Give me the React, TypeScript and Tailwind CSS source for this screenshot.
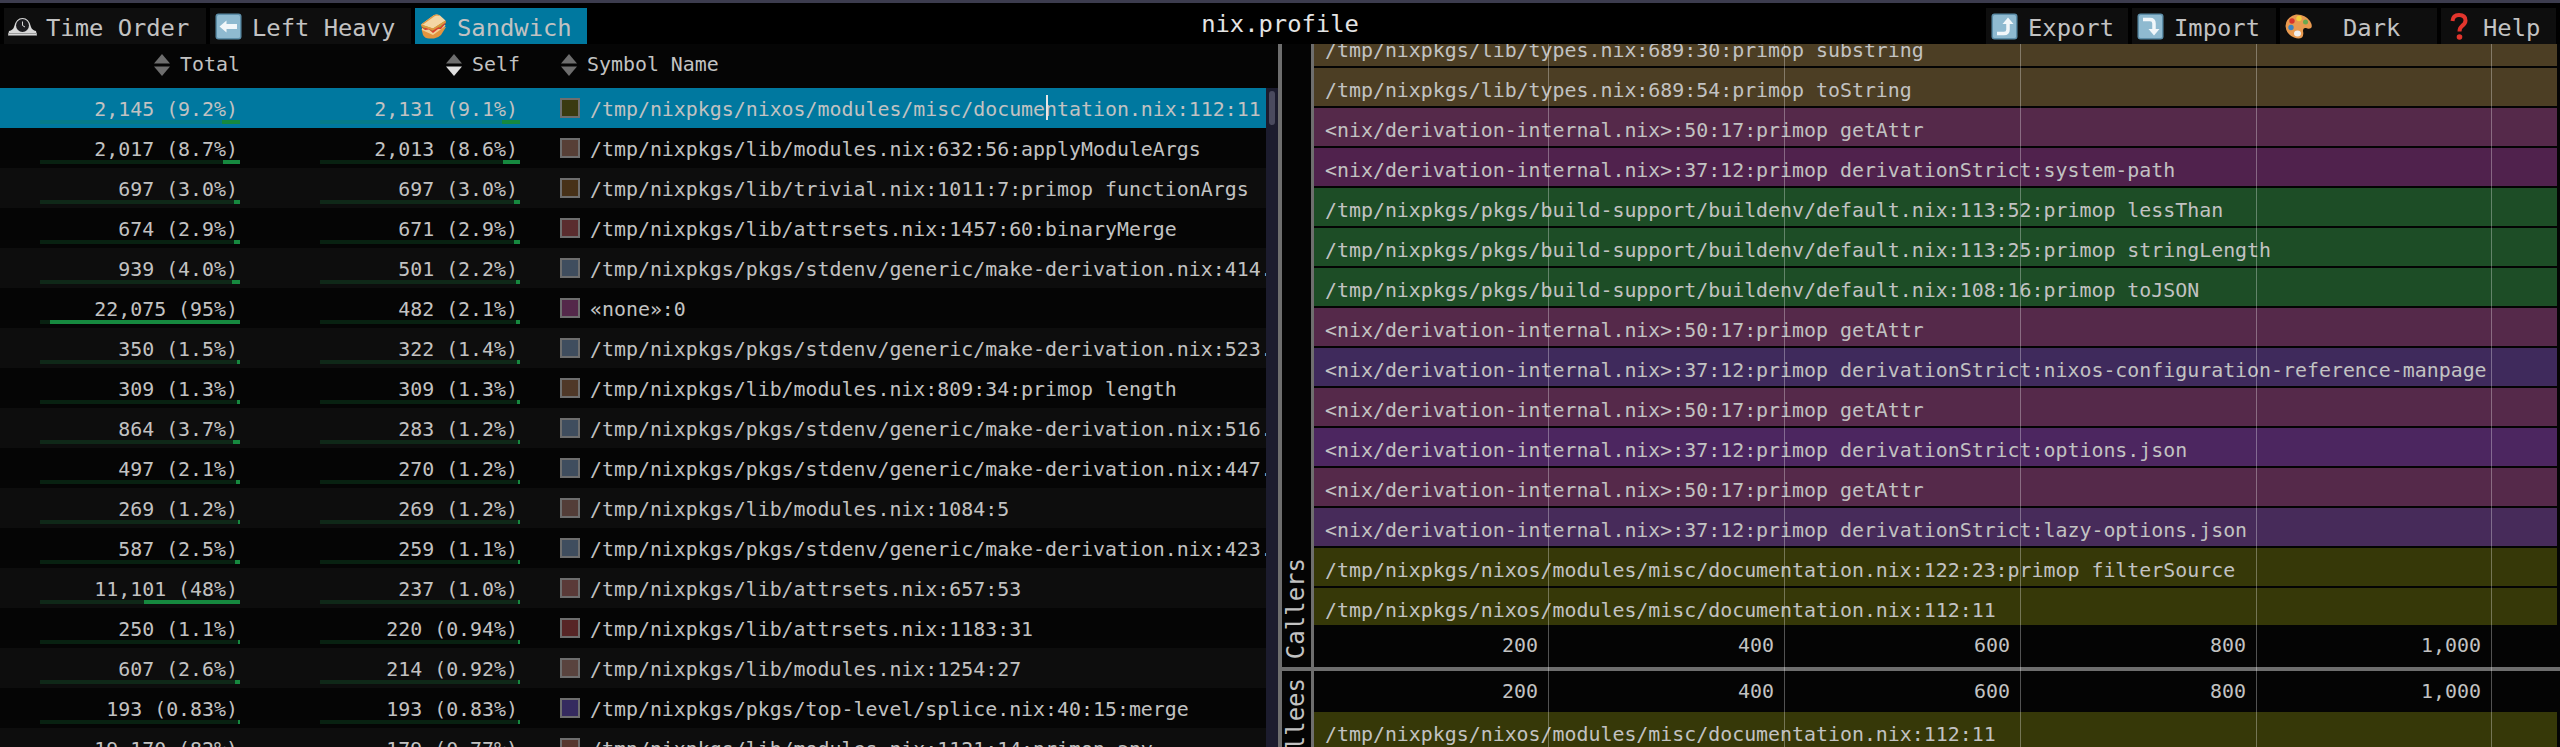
import React from 'react';

const Keycap: React.FC<{ children: React.ReactNode }> = ({ children }) => (
  <svg width="27" height="27" viewBox="0 0 27 27" className="shrink-0">
    <rect x="0.5" y="0.5" width="26" height="26" rx="3" fill="#5d8ea8" />
    <rect x="2" y="2" width="23" height="23" rx="1.5" fill="#8fbad0" />
    {children}
  </svg>
);

const ClockIcon = () => (
  <svg width="29" height="19" viewBox="0 0 29 19" className="shrink-0">
    <path d="M0 18.5 L1 14 Q5 13 6 10 Q8 1 14.5 1 Q21 1 23 10 Q24 13 28 14 L29 18.5 Z" fill="#d8d8d8" />
    <rect x="0" y="16" width="29" height="1" fill="#9a9a9a" />
    <circle cx="14.5" cy="8.5" r="6.5" fill="#1b1b1f" />
    <path d="M14.5 4.5 V8.5 L17 10" stroke="#d8d8d8" strokeWidth="1" fill="none" />
  </svg>
);

const LeftArrowIcon = () => (
  <Keycap>
    <path d="M4.5 13.5 L11.5 7.5 V11 H22 V16 H11.5 V19.5 Z" fill="#f2f7fa" />
  </Keycap>
);

const ExportIcon = () => (
  <Keycap>
    <path d="M6 20.5 H13 Q17 20.5 17 16.5 V10" stroke="#f2f7fa" strokeWidth="3.5" fill="none" />
    <path d="M11.5 11 L17 4.5 L22.5 11 Z" fill="#f2f7fa" />
  </Keycap>
);

const ImportIcon = () => (
  <Keycap>
    <path d="M6 6.5 H13 Q17 6.5 17 10.5 V17" stroke="#f2f7fa" strokeWidth="3.5" fill="none" />
    <path d="M11.5 16 L17 22.5 L22.5 16 Z" fill="#f2f7fa" />
  </Keycap>
);

const SandwichIcon = () => (
  <svg width="27" height="25" viewBox="0 0 27 25" className="shrink-0">
    {/* bottom slice */}
    <path d="M1.5 15 L3 21 Q5 24.5 9 24.5 H14 Q18 24 21 21 L26 13 Z" fill="#e3953f" />
    <path d="M2 16 L13 21 L25.5 12 L25 11 L2 14 Z" fill="#f2cf95" />
    {/* filling */}
    <path d="M1 13 L5 16 L9 15.5 L13 19 L18 15 L21 15 L26 9 L14 10 Z" fill="#d8402f" />
    <path d="M1 11.5 L4 14.5 L8 13 L12 17 L17 13 L20 13.5 L26 7 L14 6 Z" fill="#86ad38" />
    {/* top slice */}
    <path d="M1 10.5 L13 14.5 L25.5 6.5 L20 1.5 Q17 0 14 1 Z" fill="#f5d7a4" />
    <path d="M1 10.5 L14 1 Q17 0 20 1.5 L18.5 1.8 Q16.5 1.2 14.5 2.2 L3 10.6 Z" fill="#e3953f" />
    <path d="M1 10.5 L13 14.5 L25.5 6.5 L26 8.5 L13 16.5 L1.5 12.5 Z" fill="#e3953f" />
  </svg>
);

const PaletteIcon = () => (
  <svg width="27" height="25" viewBox="0 0 27 25" className="shrink-0">
    <path d="M11 0.5 Q20 0 25 7 Q28 12 26 14 Q24 15.5 21 14 Q18 13.5 18 17 Q19 21 17 23.5 Q14 25.5 9 23.5 Q1 20 0.5 12 Q1 3 11 0.5 Z" fill="#e89a50" />
    <circle cx="7" cy="7" r="2.7" fill="#d8342c" />
    <circle cx="14" cy="4.5" r="2.7" fill="#f2cf3b" />
    <circle cx="20.5" cy="8" r="2.5" fill="#6aa84f" />
    <circle cx="6" cy="13.5" r="2.7" fill="#3b82c4" />
    <ellipse cx="12.5" cy="19.5" rx="3.5" ry="3" fill="#eeeeee" />
  </svg>
);

const QuestionIcon = () => (
  <svg width="18" height="27" viewBox="0 0 18 27" className="shrink-0">
    <path d="M2.5 8 Q3 2 9 2 Q15.5 2 15.5 7.5 Q15.5 10.5 12 13 Q9.5 15 9.5 18.5" stroke="#e3352d" strokeWidth="4" fill="none" />
    <circle cx="9.5" cy="24" r="2.8" fill="#e3352d" />
  </svg>
);

interface TabProps {
  icon: React.ReactNode;
  label: string;
  widthClass: string;
  labelClass?: string;
  active?: boolean;
}

const ToolbarTab: React.FC<TabProps> = ({ icon, label, widthClass, labelClass, active }) => (
  <div className={`flex h-9 items-center ${widthClass} ${active ? 'bg-[#00789f]' : 'bg-[#0e0e0e]'}`}>
    <div className="flex w-[42px] shrink-0 justify-center pr-[8px] pl-[2px]">{icon}</div>
    <span className={`pt-[5px] leading-none ${labelClass ?? ''}`}>{label}</span>
  </div>
);

interface SymbolRow {
  total: string;
  totalPct: number;
  self: string;
  selfPct: number;
  swatch: string;
  name: string;
}

const makeDeriv = (line: string) => `/tmp/nixpkgs/pkgs/stdenv/generic/make-derivation.nix:${line}.`;

const symbolRows: SymbolRow[] = [
  { total: '2,145 (9.2%)', totalPct: 9.2, self: '2,131 (9.1%)', selfPct: 9.1, swatch: '#3a3a10', name: '/tmp/nixpkgs/nixos/modules/misc/documentation.nix:112:11' },
  { total: '2,017 (8.7%)', totalPct: 8.7, self: '2,013 (8.6%)', selfPct: 8.6, swatch: '#573f36', name: '/tmp/nixpkgs/lib/modules.nix:632:56:applyModuleArgs' },
  { total: '697 (3.0%)', totalPct: 3.0, self: '697 (3.0%)', selfPct: 3.0, swatch: '#473118', name: '/tmp/nixpkgs/lib/trivial.nix:1011:7:primop functionArgs' },
  { total: '674 (2.9%)', totalPct: 2.9, self: '671 (2.9%)', selfPct: 2.9, swatch: '#5a2c2e', name: '/tmp/nixpkgs/lib/attrsets.nix:1457:60:binaryMerge' },
  { total: '939 (4.0%)', totalPct: 4.0, self: '501 (2.2%)', selfPct: 2.2, swatch: '#3f4d5e', name: makeDeriv('414') },
  { total: '22,075 (95%)', totalPct: 95, self: '482 (2.1%)', selfPct: 2.1, swatch: '#54284a', name: '«none»:0' },
  { total: '350 (1.5%)', totalPct: 1.5, self: '322 (1.4%)', selfPct: 1.4, swatch: '#3f4d5e', name: makeDeriv('523') },
  { total: '309 (1.3%)', totalPct: 1.3, self: '309 (1.3%)', selfPct: 1.3, swatch: '#4f3828', name: '/tmp/nixpkgs/lib/modules.nix:809:34:primop length' },
  { total: '864 (3.7%)', totalPct: 3.7, self: '283 (1.2%)', selfPct: 1.2, swatch: '#3f4d5e', name: makeDeriv('516') },
  { total: '497 (2.1%)', totalPct: 2.1, self: '270 (1.2%)', selfPct: 1.2, swatch: '#3f4d5e', name: makeDeriv('447') },
  { total: '269 (1.2%)', totalPct: 1.2, self: '269 (1.2%)', selfPct: 1.2, swatch: '#533d38', name: '/tmp/nixpkgs/lib/modules.nix:1084:5' },
  { total: '587 (2.5%)', totalPct: 2.5, self: '259 (1.1%)', selfPct: 1.1, swatch: '#3f4d5e', name: makeDeriv('423') },
  { total: '11,101 (48%)', totalPct: 48, self: '237 (1.0%)', selfPct: 1.0, swatch: '#5a3a38', name: '/tmp/nixpkgs/lib/attrsets.nix:657:53' },
  { total: '250 (1.1%)', totalPct: 1.1, self: '220 (0.94%)', selfPct: 0.94, swatch: '#572526', name: '/tmp/nixpkgs/lib/attrsets.nix:1183:31' },
  { total: '607 (2.6%)', totalPct: 2.6, self: '214 (0.92%)', selfPct: 0.92, swatch: '#59433e', name: '/tmp/nixpkgs/lib/modules.nix:1254:27' },
  { total: '193 (0.83%)', totalPct: 0.83, self: '193 (0.83%)', selfPct: 0.83, swatch: '#352a5f', name: '/tmp/nixpkgs/pkgs/top-level/splice.nix:40:15:merge' },
  { total: '19,170 (82%)', totalPct: 82, self: '179 (0.77%)', selfPct: 0.77, swatch: '#56372e', name: '/tmp/nixpkgs/lib/modules.nix:1121:14:primop any' },
];

const MeterCell: React.FC<{ text: string; pct: number; className: string }> = ({ text, pct, className }) => (
  <div className={`flex w-[200px] shrink-0 flex-col ${className}`}>
    <div className="h-8 pt-[10px] pr-[2px] text-right leading-6 whitespace-nowrap">{text}</div>
    <div className="flex h-1 justify-end bg-[#16893f38]">
      <div className="h-1 bg-[#16893f]" style={{ width: `${Math.max(pct * 2, 2)}px` }} />
    </div>
  </div>
);

const SortArrows: React.FC<{ down?: boolean }> = ({ down }) => (
  <svg width="16" height="24" viewBox="0 0 16 24" className="shrink-0">
    <path d="M8 1 L16 10.5 H0 Z" fill="#6e6e6e" />
    <path d="M8 23 L16 13.5 H0 Z" fill={down ? '#e0e0e0' : '#6e6e6e'} />
  </svg>
);

const SymbolTable = () => (
  <div className="flex w-[1278px] shrink-0 flex-col bg-[#050505]">
    <div className="flex h-11 shrink-0 items-center pb-[2px]">
      <div className="ml-[154px] flex w-[86px] items-center gap-[10px]">
        <SortArrows />
        <span className="leading-none">Total</span>
      </div>
      <div className="ml-[206px] flex w-[74px] items-center gap-[10px]">
        <SortArrows down />
        <span className="leading-none">Self</span>
      </div>
      <div className="ml-[41px] flex items-center gap-[10px]">
        <SortArrows />
        <span className="leading-none">Symbol Name</span>
      </div>
    </div>
    <div className="flex min-h-0 flex-1 overflow-hidden">
      <div className="relative w-[1266px] shrink-0">
        {symbolRows.map((row, i) => (
          <div
            key={row.name + i}
            className={`flex h-10 ${i === 0 ? 'bg-[#00789f]' : i % 2 === 0 ? 'bg-[#0d0d0d]' : 'bg-[#050505]'}`}
          >
            <MeterCell text={row.total} pct={row.totalPct} className="ml-10" />
            <MeterCell text={row.self} pct={row.selfPct} className="ml-20" />
            <div
              className="mt-[10px] ml-10 h-5 w-5 shrink-0 border-2 border-[#6e6e6e]"
              style={{ backgroundColor: row.swatch }}
            />
            <div className="ml-[10px] min-w-0 flex-1 overflow-hidden pt-[10px] leading-6 whitespace-nowrap">{row.name}</div>
          </div>
        ))}
        {/* mouse cursor left over the selected row */}
        <div className="absolute top-[7px] left-[1046px] h-[25px] w-[2px] bg-[#e6e6e6]" />
      </div>
      <div className="w-3 shrink-0 bg-[#1c1c2e] pt-[3px] pl-[3px]">
        <div className="h-[34px] w-[6px] rounded-[3px] bg-[#4a4a5e]" />
      </div>
    </div>
  </div>
);

const flameRows: { name: string; color: string }[] = [
  { name: '/tmp/nixpkgs/lib/types.nix:689:30:primop substring', color: '#4c3e24' },
  { name: '/tmp/nixpkgs/lib/types.nix:689:54:primop toString', color: '#4c3e24' },
  { name: '<nix/derivation-internal.nix>:50:17:primop getAttr', color: '#55294a' },
  { name: '<nix/derivation-internal.nix>:37:12:primop derivationStrict:system-path', color: '#50224d' },
  { name: '/tmp/nixpkgs/pkgs/build-support/buildenv/default.nix:113:52:primop lessThan', color: '#1d4d26' },
  { name: '/tmp/nixpkgs/pkgs/build-support/buildenv/default.nix:113:25:primop stringLength', color: '#1d4d26' },
  { name: '/tmp/nixpkgs/pkgs/build-support/buildenv/default.nix:108:16:primop toJSON', color: '#1d4d26' },
  { name: '<nix/derivation-internal.nix>:50:17:primop getAttr', color: '#55294a' },
  { name: '<nix/derivation-internal.nix>:37:12:primop derivationStrict:nixos-configuration-reference-manpage', color: '#3f2a5c' },
  { name: '<nix/derivation-internal.nix>:50:17:primop getAttr', color: '#55294a' },
  { name: '<nix/derivation-internal.nix>:37:12:primop derivationStrict:options.json', color: '#4c2660' },
  { name: '<nix/derivation-internal.nix>:50:17:primop getAttr', color: '#55294a' },
  { name: '<nix/derivation-internal.nix>:37:12:primop derivationStrict:lazy-options.json', color: '#472b5a' },
  { name: '/tmp/nixpkgs/nixos/modules/misc/documentation.nix:122:23:primop filterSource', color: '#363808' },
  { name: '/tmp/nixpkgs/nixos/modules/misc/documentation.nix:112:11', color: '#363808' },
];

const FlameBar: React.FC<{ name: string; color: string; heightClass: string }> = ({ name, color, heightClass }) => (
  <div
    className={`shrink-0 overflow-hidden pt-[11px] pl-[11px] leading-6 whitespace-nowrap ${heightClass}`}
    style={{ backgroundColor: color }}
  >
    {name}
  </div>
);

const axisTicks = ['200', '400', '600', '800', '1,000'];

const TimeAxis: React.FC<{ heightClass: string }> = ({ heightClass }) => (
  <div className={`mr-[3px] flex shrink-0 items-center ${heightClass}`}>
    {axisTicks.map((tick, i) => (
      <div
        key={tick}
        className={`pr-[11px] text-right leading-none ${i === 0 || i === 4 ? 'w-[235px]' : 'w-[236px]'}`}
      >
        {tick}
      </div>
    ))}
  </div>
);

const SideLabel: React.FC<{ label: string; alignClass: string }> = ({ label, alignClass }) => (
  <>
    <div className={`flex w-[29px] shrink-0 flex-col items-center overflow-hidden bg-[#040404] ${alignClass}`}>
      <span className="shrink-0 rotate-180 text-[24px] leading-[29px] whitespace-nowrap [writing-mode:vertical-rl]">{label}</span>
    </div>
    <div className="w-[3px] shrink-0 bg-[#6e6e6e]" />
  </>
);

const FlamePanes = () => (
  <div className="relative flex min-w-0 flex-1 flex-col">
    <div className="flex h-[623px] shrink-0">
      <SideLabel label="Callers" alignClass="justify-end pb-2" />
      <div className="flex min-w-0 flex-1 flex-col justify-end overflow-hidden bg-[#040404]">
        <div className="mr-[3px] flex flex-col gap-[2px]">
          {flameRows.map((row, i) => (
            <FlameBar
              key={row.name + i}
              name={row.name}
              color={row.color}
              heightClass={i === flameRows.length - 1 ? 'h-[37px]' : 'h-[38px]'}
            />
          ))}
        </div>
        <TimeAxis heightClass="h-[42px]" />
      </div>
    </div>
    <div className="h-1 shrink-0 bg-[#6e6e6e]" />
    <div className="flex min-h-0 flex-1 overflow-hidden">
      <SideLabel label="Callees" alignClass="justify-start pt-[7px]" />
      <div className="min-w-0 flex-1 bg-[#040404]">
        <TimeAxis heightClass="h-[41px]" />
        <div className="mr-[3px]">
          <FlameBar name="/tmp/nixpkgs/nixos/modules/misc/documentation.nix:112:11" color="#363808" heightClass="h-[38px]" />
        </div>
      </div>
    </div>
    {/* vertical grid lines drawn over both flame panes */}
    <div className="pointer-events-none absolute inset-y-0 left-[32px] flex">
      <div className="w-[235px] border-r border-[#ffffff50]" />
      <div className="w-[236px] border-r border-[#ffffff50]" />
      <div className="w-[236px] border-r border-[#ffffff50]" />
      <div className="w-[236px] border-r border-[#ffffff50]" />
      <div className="w-[235px] border-r border-[#ffffff50]" />
    </div>
  </div>
);

export default function App() {
  return (
    <div className="flex h-[747px] w-[2560px] flex-col overflow-hidden bg-black font-['DejaVu_Sans_Mono',monospace] text-[19.9px] text-[#c2c2c2]">
      <div className="h-[3px] shrink-0 bg-[#3c3c4e]" />
      <div className="grid h-[41px] shrink-0 grid-cols-[1fr_auto_1fr] pt-[5px] text-[23.8px]">
        <div className="flex gap-1 pl-1">
          <ToolbarTab icon={<ClockIcon />} label="Time Order" widthClass="w-[202px]" />
          <ToolbarTab icon={<LeftArrowIcon />} label="Left Heavy" widthClass="w-[201px]" />
          <ToolbarTab icon={<SandwichIcon />} label="Sandwich" widthClass="w-[172px]" active />
        </div>
        <div className="pt-[4px] leading-[24px] text-[#e4e4e4]">nix.profile</div>
        <div className="flex justify-end gap-1 pr-1">
          <ToolbarTab icon={<ExportIcon />} label="Export" widthClass="w-[142px]" />
          <ToolbarTab icon={<ImportIcon />} label="Import" widthClass="w-[144px]" />
          <ToolbarTab icon={<PaletteIcon />} label="Dark" widthClass="w-[157px]" labelClass="ml-[21px]" />
          <ToolbarTab icon={<QuestionIcon />} label="Help" widthClass="w-[115px]" />
        </div>
      </div>
      <div className="flex min-h-0 flex-1">
        <SymbolTable />
        <div className="w-1 shrink-0 bg-[#6e6e6e]" />
        <FlamePanes />
      </div>
    </div>
  );
}
